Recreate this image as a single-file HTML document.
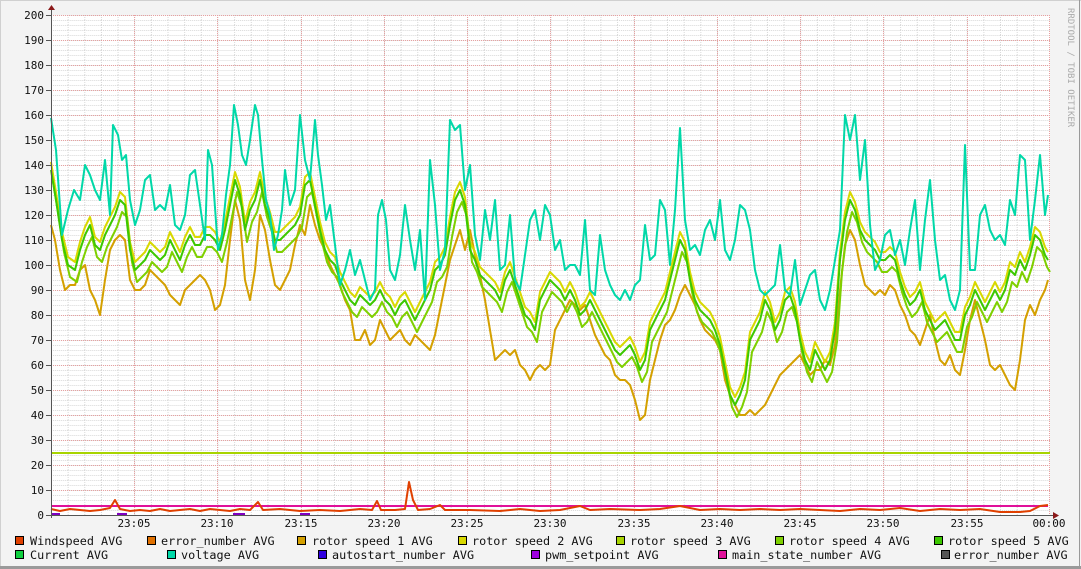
<!DOCTYPE html>
<html><head><meta charset="utf-8"><style>
html,body{margin:0;padding:0;background:#f3f3f3;}
body{width:1081px;height:569px;overflow:hidden;position:relative;}
svg{position:absolute;left:0;top:0;}
text{font-family:"DejaVu Sans Mono","Liberation Mono",monospace;}
</style></head><body>
<svg width="1081" height="569" viewBox="0 0 1081 569" xmlns="http://www.w3.org/2000/svg">
<defs>
<pattern id="minor" x="51" y="15" width="16.65" height="5" patternUnits="userSpaceOnUse">
<line x1="0.5" y1="0" x2="0.5" y2="5" stroke="#d8d8d8" stroke-dasharray="1,1"/>
<line x1="0" y1="0.5" x2="16.65" y2="0.5" stroke="#d8d8d8" stroke-dasharray="1,1"/>
</pattern>
</defs>
<rect x="0" y="0" width="1081" height="569" fill="#f3f3f3"/>
<line x1="0" y1="0.5" x2="1081" y2="0.5" stroke="#d0d0d0"/>
<line x1="0.5" y1="0" x2="0.5" y2="569" stroke="#d0d0d0"/>
<line x1="1079.5" y1="0" x2="1079.5" y2="569" stroke="#999"/>
<rect x="0" y="566" width="1081" height="3" fill="#9a9a9a"/>
<rect x="51" y="15" width="999" height="500" fill="#fff"/>
<rect x="51" y="15" width="999" height="500" fill="url(#minor)"/>
<g stroke="#e8a0a0" stroke-dasharray="1,1">
<line x1="51" y1="15.5" x2="1050" y2="15.5"/><line x1="51" y1="40.5" x2="1050" y2="40.5"/><line x1="51" y1="65.5" x2="1050" y2="65.5"/><line x1="51" y1="90.5" x2="1050" y2="90.5"/><line x1="51" y1="115.5" x2="1050" y2="115.5"/><line x1="51" y1="140.5" x2="1050" y2="140.5"/><line x1="51" y1="165.5" x2="1050" y2="165.5"/><line x1="51" y1="190.5" x2="1050" y2="190.5"/><line x1="51" y1="215.5" x2="1050" y2="215.5"/><line x1="51" y1="240.5" x2="1050" y2="240.5"/><line x1="51" y1="265.5" x2="1050" y2="265.5"/><line x1="51" y1="290.5" x2="1050" y2="290.5"/><line x1="51" y1="315.5" x2="1050" y2="315.5"/><line x1="51" y1="340.5" x2="1050" y2="340.5"/><line x1="51" y1="365.5" x2="1050" y2="365.5"/><line x1="51" y1="390.5" x2="1050" y2="390.5"/><line x1="51" y1="415.5" x2="1050" y2="415.5"/><line x1="51" y1="440.5" x2="1050" y2="440.5"/><line x1="51" y1="465.5" x2="1050" y2="465.5"/><line x1="51" y1="490.5" x2="1050" y2="490.5"/>
<line x1="134.5" y1="15" x2="134.5" y2="515"/><line x1="217.5" y1="15" x2="217.5" y2="515"/><line x1="301.5" y1="15" x2="301.5" y2="515"/><line x1="384.5" y1="15" x2="384.5" y2="515"/><line x1="467.5" y1="15" x2="467.5" y2="515"/><line x1="550.5" y1="15" x2="550.5" y2="515"/><line x1="634.5" y1="15" x2="634.5" y2="515"/><line x1="717.5" y1="15" x2="717.5" y2="515"/><line x1="800.5" y1="15" x2="800.5" y2="515"/><line x1="883.5" y1="15" x2="883.5" y2="515"/><line x1="967.5" y1="15" x2="967.5" y2="515"/><line x1="1049.5" y1="15" x2="1049.5" y2="515"/>
</g>
<g fill="none" stroke-width="2" stroke-linejoin="round">
<polyline stroke="#a8d400" points="51,453 1050,453"/>
<polyline id="orange" stroke="#d4a000" points="51,225 55,240 60,270 65,290 70,285 75,285 80,270 85,265 90,290 95,300 100,315 105,280 110,250 115,240 120,235 125,240 130,280 135,290 140,290 145,285 150,270 155,275 160,280 165,285 170,295 175,300 180,305 185,290 190,285 195,280 200,275 205,280 210,290 215,310 220,305 225,285 230,240 235,200 240,220 245,280 250,300 255,270 260,215 265,230 270,260 275,285 280,290 285,280 290,270 295,245 300,225 305,235 310,205 315,225 320,240 325,250 330,265 335,275 340,285 345,300 350,310 355,340 360,340 365,330 370,345 375,340 380,320 385,330 390,340 395,335 400,330 405,340 410,345 415,335 420,340 425,345 430,350 435,335 440,310 445,285 450,260 455,245 460,230 465,250 470,230 475,255 480,275 485,300 490,330 495,360 500,355 505,350 510,355 515,350 520,365 525,370 530,380 535,370 540,365 545,370 550,365 555,330 560,320 565,310 570,300 575,305 580,310 585,305 590,320 595,335 600,345 605,355 610,360 615,375 620,380 625,380 630,385 635,400 640,420 645,415 650,380 655,360 660,340 665,325 670,320 675,310 680,295 685,285 690,295 695,305 700,320 705,330 710,335 715,340 720,350 725,380 730,395 735,405 740,415 745,415 750,410 755,415 760,410 765,405 770,395 775,385 780,375 785,370 790,365 795,360 800,355 805,365 810,375 815,370 820,370 825,360 830,365 835,345 840,290 845,245 850,230 855,240 860,265 865,285 870,290 875,295 880,290 885,295 890,285 895,290 900,305 905,315 910,330 915,335 920,345 925,330 930,315 935,340 940,360 945,365 950,355 955,370 960,375 965,350 970,320 975,300 980,320 985,340 990,365 995,370 1000,365 1005,375 1010,385 1015,390 1020,360 1025,320 1030,305 1035,315 1040,300 1045,290 1048,280"/>
<polyline stroke="#d8d800" transform="translate(0,-8)" points="51,170 56,200 62,240 68,265 75,270 80,250 85,235 90,225 95,245 100,250 105,235 110,225 115,215 120,200 125,205 130,250 135,270 140,265 145,260 150,250 155,255 160,260 165,255 170,240 175,250 180,260 185,245 190,235 195,245 200,245 205,235 210,235 215,240 220,250 225,230 230,205 235,180 240,195 245,230 250,210 255,200 260,180 265,205 270,220 275,240 280,240 285,235 290,230 295,225 300,215 305,185 310,180 315,205 320,230 325,250 330,260 335,265 340,280 345,290 350,300 355,305 360,295 365,300 370,305 375,300 380,290 385,300 390,305 395,315 400,305 405,300 410,310 415,320 420,310 425,300 430,290 435,270 440,265 445,255 450,225 455,200 460,190 465,205 470,250 475,260 480,275 485,280 490,285 495,290 500,300 505,280 510,270 515,285 520,300 525,315 530,320 535,330 540,300 545,290 550,280 555,285 560,290 565,300 570,290 575,300 580,315 585,310 590,300 595,310 600,320 605,330 610,340 615,350 620,355 625,350 630,345 635,355 640,370 645,360 650,330 655,320 660,310 665,300 670,280 675,260 680,240 685,250 690,280 695,300 700,310 705,315 710,320 715,330 720,345 725,370 730,395 735,405 740,395 745,380 750,340 755,330 760,320 765,300 770,310 775,330 780,320 785,300 790,295 795,310 800,340 805,360 810,370 815,350 820,360 825,370 830,360 835,330 840,260 845,220 850,200 855,210 860,230 865,240 870,245 875,250 880,260 885,260 890,255 895,260 900,280 905,295 910,305 915,300 920,290 925,310 930,320 935,330 940,325 945,320 950,330 955,340 960,340 965,315 970,305 975,290 980,300 985,310 990,300 995,290 1000,300 1005,290 1010,270 1015,275 1020,260 1025,270 1030,255 1035,235 1040,240 1045,255 1048,260"/>
<polyline stroke="#7ed000" transform="translate(2,12)" points="51,170 56,200 62,240 68,265 75,270 80,250 85,235 90,225 95,245 100,250 105,235 110,225 115,215 120,200 125,205 130,250 135,270 140,265 145,260 150,250 155,255 160,260 165,255 170,240 175,250 180,260 185,245 190,235 195,245 200,245 205,235 210,235 215,240 220,250 225,230 230,205 235,180 240,195 245,230 250,210 255,200 260,180 265,205 270,220 275,240 280,240 285,235 290,230 295,225 300,215 305,185 310,180 315,205 320,230 325,250 330,260 335,265 340,280 345,290 350,300 355,305 360,295 365,300 370,305 375,300 380,290 385,300 390,305 395,315 400,305 405,300 410,310 415,320 420,310 425,300 430,290 435,270 440,265 445,255 450,225 455,200 460,190 465,205 470,250 475,260 480,275 485,280 490,285 495,290 500,300 505,280 510,270 515,285 520,300 525,315 530,320 535,330 540,300 545,290 550,280 555,285 560,290 565,300 570,290 575,300 580,315 585,310 590,300 595,310 600,320 605,330 610,340 615,350 620,355 625,350 630,345 635,355 640,370 645,360 650,330 655,320 660,310 665,300 670,280 675,260 680,240 685,250 690,280 695,300 700,310 705,315 710,320 715,330 720,345 725,370 730,395 735,405 740,395 745,380 750,340 755,330 760,320 765,300 770,310 775,330 780,320 785,300 790,295 795,310 800,340 805,360 810,370 815,350 820,360 825,370 830,360 835,330 840,260 845,220 850,200 855,210 860,230 865,240 870,245 875,250 880,260 885,260 890,255 895,260 900,280 905,295 910,305 915,300 920,290 925,310 930,320 935,330 940,325 945,320 950,330 955,340 960,340 965,315 970,305 975,290 980,300 985,310 990,300 995,290 1000,300 1005,290 1010,270 1015,275 1020,260 1025,270 1030,255 1035,235 1040,240 1045,255 1048,260"/>
<polyline stroke="#3cc800" points="51,170 56,200 62,240 68,265 75,270 80,250 85,235 90,225 95,245 100,250 105,235 110,225 115,215 120,200 125,205 130,250 135,270 140,265 145,260 150,250 155,255 160,260 165,255 170,240 175,250 180,260 185,245 190,235 195,245 200,245 205,235 210,235 215,240 220,250 225,230 230,205 235,180 240,195 245,230 250,210 255,200 260,180 265,205 270,220 275,240 280,240 285,235 290,230 295,225 300,215 305,185 310,180 315,205 320,230 325,250 330,260 335,265 340,280 345,290 350,300 355,305 360,295 365,300 370,305 375,300 380,290 385,300 390,305 395,315 400,305 405,300 410,310 415,320 420,310 425,300 430,290 435,270 440,265 445,255 450,225 455,200 460,190 465,205 470,250 475,260 480,275 485,280 490,285 495,290 500,300 505,280 510,270 515,285 520,300 525,315 530,320 535,330 540,300 545,290 550,280 555,285 560,290 565,300 570,290 575,300 580,315 585,310 590,300 595,310 600,320 605,330 610,340 615,350 620,355 625,350 630,345 635,355 640,370 645,360 650,330 655,320 660,310 665,300 670,280 675,260 680,240 685,250 690,280 695,300 700,310 705,315 710,320 715,330 720,345 725,370 730,395 735,405 740,395 745,380 750,340 755,330 760,320 765,300 770,310 775,330 780,320 785,300 790,295 795,310 800,340 805,360 810,370 815,350 820,360 825,370 830,360 835,330 840,260 845,220 850,200 855,210 860,230 865,240 870,245 875,250 880,260 885,260 890,255 895,260 900,280 905,295 910,305 915,300 920,290 925,310 930,320 935,330 940,325 945,320 950,330 955,340 960,340 965,315 970,305 975,290 980,300 985,310 990,300 995,290 1000,300 1005,290 1010,270 1015,275 1020,260 1025,270 1030,255 1035,235 1040,240 1045,255 1048,260"/>
<polyline stroke="#00d8a8" points="51,118 56,150 62,235 68,210 74,190 80,200 85,165 90,175 95,190 100,200 105,160 110,215 113,125 118,135 122,160 126,155 130,200 135,225 140,210 145,180 150,175 155,210 160,205 165,210 170,185 175,225 180,230 185,215 190,175 195,170 200,205 205,240 208,150 212,165 218,250 222,235 226,195 230,165 234,105 238,125 242,155 246,165 250,140 255,105 258,115 262,160 266,200 270,215 274,250 278,235 282,210 285,170 290,205 295,190 300,115 305,160 310,180 315,120 318,155 322,185 326,220 330,205 335,245 340,285 345,270 350,250 355,275 360,260 365,280 370,300 375,290 378,215 382,200 386,220 390,270 395,280 400,255 405,205 410,240 415,270 420,230 425,300 430,160 435,205 440,270 445,250 450,120 455,130 460,125 465,190 470,165 475,235 480,260 485,210 490,240 495,200 500,270 505,265 510,215 515,280 520,290 525,255 530,220 535,210 540,240 545,205 550,215 555,250 560,240 565,270 570,265 575,265 580,275 585,220 590,290 595,295 600,235 605,270 610,285 615,295 620,300 625,290 630,300 635,285 640,280 645,225 650,260 655,255 660,200 665,210 670,265 675,210 680,128 685,220 690,250 695,245 700,255 705,230 710,220 715,240 720,200 725,250 730,260 735,240 740,205 745,210 750,230 755,270 760,290 765,295 770,290 775,285 780,245 785,290 790,295 795,260 800,305 805,290 810,275 815,270 820,300 825,310 830,290 835,260 840,230 845,115 850,140 855,115 860,180 865,140 870,225 875,270 880,260 885,235 890,230 895,255 900,240 905,265 910,230 915,200 920,270 925,220 930,180 935,240 940,280 945,275 950,300 955,310 960,290 965,145 970,270 975,270 980,215 985,205 990,230 995,240 1000,235 1005,245 1010,200 1015,215 1020,155 1025,160 1030,240 1035,200 1040,155 1045,215 1048,195"/>
<polyline stroke="#e0109a" points="51,506 1048,506"/>
<polyline stroke="#e04000" points="51,509 60,511 70,509 80,510 90,511 100,510 110,508 115,500 120,509 130,511 140,510 150,511 160,509 170,511 180,510 190,509 200,511 210,509 220,510 230,511 240,509 250,510 258,502 263,510 280,509 300,511 320,510 340,511 360,509 372,510 377,501 381,510 395,510 405,509 409,482 413,500 418,510 430,509 440,505 445,510 470,510 500,511 520,509 540,511 560,510 580,506 590,510 610,509 640,510 660,509 680,506 700,510 720,509 740,510 760,509 780,510 800,509 820,510 840,511 860,509 880,510 900,508 920,511 940,509 960,510 980,509 1000,512 1020,512 1030,511 1040,506 1048,505"/>
</g>
<g fill="#8000c0"><rect x="52" y="513" width="8" height="2"/><rect x="117" y="513" width="10" height="2"/><rect x="233" y="513" width="12" height="2"/><rect x="300" y="513" width="10" height="2"/></g>
<line x1="51.5" y1="10" x2="51.5" y2="518" stroke="#555"/>
<line x1="46" y1="515.5" x2="1055" y2="515.5" stroke="#555"/>
<polygon points="48,10 55,10 51.5,5" fill="#8b1a1a"/>
<polygon points="1053,512 1053,519 1059,515.5" fill="#8b1a1a"/>
<g stroke="#555"><line x1="46" y1="15.5" x2="51" y2="15.5"/><line x1="46" y1="40.5" x2="51" y2="40.5"/><line x1="46" y1="65.5" x2="51" y2="65.5"/><line x1="46" y1="90.5" x2="51" y2="90.5"/><line x1="46" y1="115.5" x2="51" y2="115.5"/><line x1="46" y1="140.5" x2="51" y2="140.5"/><line x1="46" y1="165.5" x2="51" y2="165.5"/><line x1="46" y1="190.5" x2="51" y2="190.5"/><line x1="46" y1="215.5" x2="51" y2="215.5"/><line x1="46" y1="240.5" x2="51" y2="240.5"/><line x1="46" y1="265.5" x2="51" y2="265.5"/><line x1="46" y1="290.5" x2="51" y2="290.5"/><line x1="46" y1="315.5" x2="51" y2="315.5"/><line x1="46" y1="340.5" x2="51" y2="340.5"/><line x1="46" y1="365.5" x2="51" y2="365.5"/><line x1="46" y1="390.5" x2="51" y2="390.5"/><line x1="46" y1="415.5" x2="51" y2="415.5"/><line x1="46" y1="440.5" x2="51" y2="440.5"/><line x1="46" y1="465.5" x2="51" y2="465.5"/><line x1="46" y1="490.5" x2="51" y2="490.5"/></g>
<g font-size="11" fill="#111" text-anchor="end">
<text x="44" y="19">200</text><text x="44" y="44">190</text><text x="44" y="69">180</text><text x="44" y="94">170</text><text x="44" y="119">160</text><text x="44" y="144">150</text><text x="44" y="169">140</text><text x="44" y="194">130</text><text x="44" y="219">120</text><text x="44" y="244">110</text><text x="44" y="269">100</text><text x="44" y="294">90</text><text x="44" y="319">80</text><text x="44" y="344">70</text><text x="44" y="369">60</text><text x="44" y="394">50</text><text x="44" y="419">40</text><text x="44" y="444">30</text><text x="44" y="469">20</text><text x="44" y="494">10</text><text x="44" y="519">0</text>
</g>
<g font-size="11" fill="#111" text-anchor="middle">
<text x="134" y="527">23:05</text><text x="217" y="527">23:10</text><text x="301" y="527">23:15</text><text x="384" y="527">23:20</text><text x="467" y="527">23:25</text><text x="550" y="527">23:30</text><text x="634" y="527">23:35</text><text x="717" y="527">23:40</text><text x="800" y="527">23:45</text><text x="883" y="527">23:50</text><text x="967" y="527">23:55</text><text x="1049" y="527">00:00</text>
</g>
<text transform="translate(1068,8) rotate(90)" font-size="9" fill="#aaa">RRDTOOL / TOBI OETIKER</text>
<g stroke="#000" stroke-width="1">
<rect x="15.5" y="536.5" width="8" height="8" fill="#e04000"/>
<rect x="147.5" y="536.5" width="8" height="8" fill="#e07000"/>
<rect x="297.5" y="536.5" width="8" height="8" fill="#d4a000"/>
<rect x="458.5" y="536.5" width="8" height="8" fill="#d8d800"/>
<rect x="616.5" y="536.5" width="8" height="8" fill="#a8d400"/>
<rect x="775.5" y="536.5" width="8" height="8" fill="#7ed000"/>
<rect x="934.5" y="536.5" width="8" height="8" fill="#3cc800"/>
<rect x="15.5" y="550.5" width="8" height="8" fill="#10d040"/>
<rect x="167.5" y="550.5" width="8" height="8" fill="#00d8a8"/>
<rect x="318.5" y="550.5" width="8" height="8" fill="#3000e0"/>
<rect x="531.5" y="550.5" width="8" height="8" fill="#a000e0"/>
<rect x="718.5" y="550.5" width="8" height="8" fill="#e0109a"/>
<rect x="941.5" y="550.5" width="8" height="8" fill="#555"/>
</g>
<g font-size="11.8" fill="#111" xml:space="preserve">
<text x="30" y="545">Windspeed AVG</text>
<text x="161" y="545">error_number AVG</text>
<text x="312" y="545">rotor speed 1 AVG</text>
<text x="472" y="545">rotor speed 2 AVG</text>
<text x="630" y="545">rotor speed 3 AVG</text>
<text x="789" y="545">rotor speed 4 AVG</text>
<text x="948" y="545">rotor speed 5 AVG</text>
<text x="30" y="559">Current AVG</text>
<text x="181" y="559">voltage AVG</text>
<text x="332" y="559">autostart_number AVG</text>
<text x="545" y="559">pwm_setpoint AVG</text>
<text x="732" y="559">main_state_number AVG</text>
<text x="954" y="559">error_number AVG</text>
</g>
</svg>
</body></html>
